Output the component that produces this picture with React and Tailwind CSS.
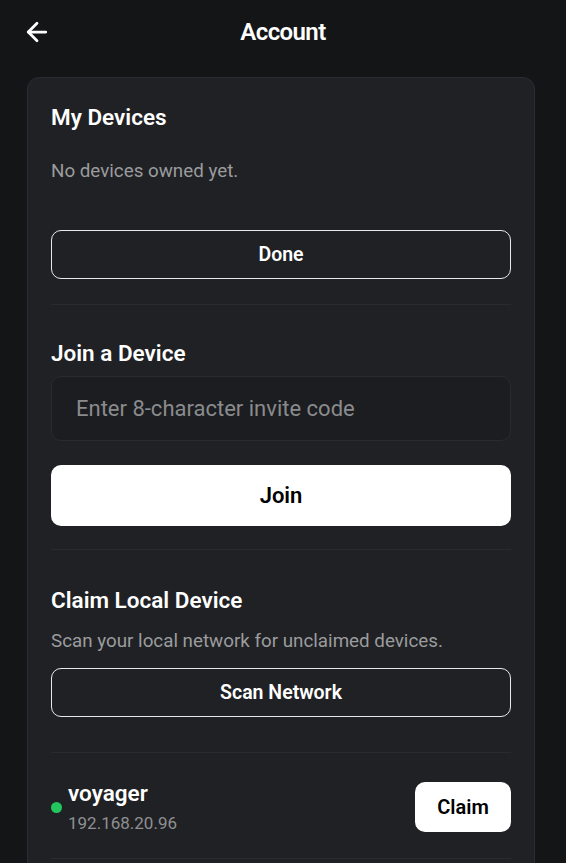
import { ArrowLeft } from 'lucide-react';

function OutlineButton({ children }) {
  return (
    <button className="w-full h-[49px] rounded-[10px] border-[1.5px] border-white/90 text-white text-[19.5px] font-semibold">
      {children}
    </button>
  );
}

export default function App() {
  return (
    <div className="min-h-screen bg-[#141517] text-white font-['Roboto',sans-serif] overflow-hidden">
      {/* header */}
      <div className="relative h-16 flex items-center justify-center">
        <button className="absolute left-[22px] top-[17px] text-white">
          <ArrowLeft size={30} strokeWidth={2.2} />
        </button>
        <h1 className="text-[24px] font-semibold tracking-tight">Account</h1>
      </div>

      <div className="ml-[27px] mr-[31px] mt-[13px] bg-[#202124] border border-[#2b2c2f] rounded-[12px] px-[23px] pt-[25px] pb-8">
        {/* my devices */}
        <h2 className="text-[22.5px] font-semibold leading-7">My Devices</h2>
        <p className="mt-[28px] text-[18.8px] leading-6 text-[#9b9c9e]">No devices owned yet.</p>
        <div className="mt-[47px]">
          <OutlineButton>Done</OutlineButton>
        </div>

        <div className="mt-[25px] border-t border-[#2a2b2e]" />

        {/* join */}
        <h2 className="mt-[34px] text-[22.5px] font-semibold leading-7">Join a Device</h2>
        <input
          className="mt-[9px] w-full h-[65px] rounded-[10px] bg-[#1c1d20] border border-[#2a2b2e] px-6 text-[22px] text-white placeholder:text-[#8a8b8d] outline-none"
          placeholder="Enter 8-character invite code"
        />
        <button className="mt-6 w-full h-[61px] rounded-[10px] bg-white text-black text-[22px] font-semibold">
          Join
        </button>

        <div className="mt-[23px] border-t border-[#2a2b2e]" />

        {/* claim */}
        <h2 className="mt-9 text-[22.5px] font-semibold leading-7">Claim Local Device</h2>
        <p className="mt-[15px] text-[18.8px] leading-6 text-[#9b9c9e]">Scan your local network for unclaimed devices.</p>
        <div className="mt-[15px]">
          <OutlineButton>Scan Network</OutlineButton>
        </div>

        <div className="mt-[35px] border-t border-[#2a2b2e]" />

        <div className="flex items-center justify-between pt-[26px] pb-[24px]">
          <div className="flex items-center">
            <span className="w-[11px] h-[11px] rounded-full bg-[#22c55e] mt-[2px]" />
            <div className="ml-[6px]">
              <div className="text-[22.5px] font-semibold leading-7">voyager</div>
              <div className="mt-[5px] text-[17px] leading-[22px] text-[#8f9092]">192.168.20.96</div>
            </div>
          </div>
          <button className="w-[96px] h-[50px] rounded-[10px] bg-white text-black text-[20px] font-semibold">
            Claim
          </button>
        </div>

        <div className="border-t border-[#2a2b2e]" />
      </div>
    </div>
  );
}
